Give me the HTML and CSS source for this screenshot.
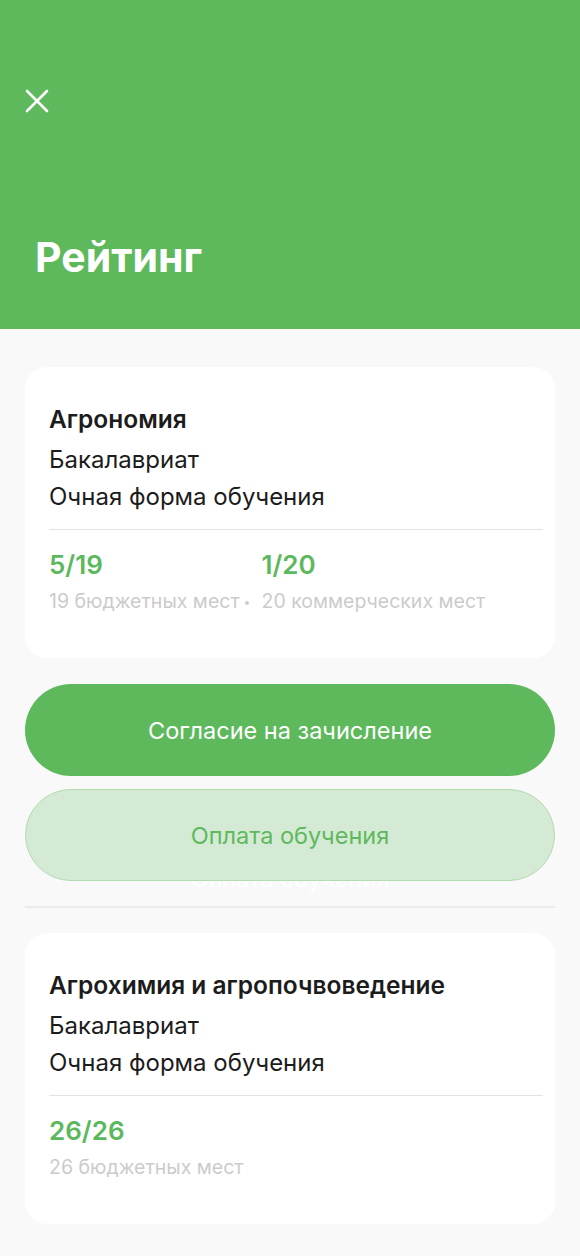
FILE: index.html
```html
<!DOCTYPE html>
<html>
  <head>
    <meta charset="utf-8" />
    <meta name="viewport" content="width=device-width, initial-scale=1.0" />
    <title>Рейтинг</title>
    <link rel="stylesheet" href="styles.css">
  </head>
  <body>
    <header class="top">
      <div class="close">
        <svg width="24" height="24" viewBox="0 0 24 24">
          <path d="M2 2 L22 22 M22 2 L2 22" stroke="#fff" stroke-width="2.6" stroke-linecap="round" fill="none"/>
        </svg>
      </div>
      <h1>Рейтинг</h1>
    </header>
    <main>
      <section class="card">
        <div class="title">Агрономия</div>
        <div class="line">Бакалавриат</div>
        <div class="line last">Очная форма обучения</div>
        <div class="stats">
          <div class="stat">
            <div class="num">5/19</div>
            <div class="sub">19 бюджетных мест</div>
          </div>
          <div class="dot"></div>
          <div class="stat">
            <div class="num">1/20</div>
            <div class="sub">20 коммерческих мест</div>
          </div>
        </div>
      </section>

      <div class="actions">
        <button class="btn primary">Согласие на зачисление</button>
        <button class="btn soft">Оплата обучения</button>
        <div class="ghost">Оплата обучения</div>
      </div>

      <hr class="sep">

      <section class="card">
        <div class="title">Агрохимия и агропочвоведение</div>
        <div class="line">Бакалавриат</div>
        <div class="line last">Очная форма обучения</div>
        <div class="stats">
          <div class="stat">
            <div class="num">26/26</div>
            <div class="sub">26 бюджетных мест</div>
          </div>
        </div>
      </section>
    </main>
  </body>
</html>
```

FILE: styles.css
```css
html, body {
    margin: 0;
    background: #f9f9f9;
    font-family: 'Inter', 'Roboto', sans-serif;
    color: #1c1c1c;
    overflow: hidden;
}
.top {
    background: #5eb95d;
    height: 329px;
    box-sizing: border-box;
    padding: 89px 0 0 25px;
}
.close {
    width: 24px;
    height: 24px;
}
.close svg {
    display: block;
}
.top h1 {
    margin: 120px 0 0 10px;
    color: #fff;
    font-size: 41px;
    font-weight: 700;
    line-height: 48px;
}
main {
    padding: 38px 25px 0;
}
.card {
    background: #fff;
    border-radius: 22px;
    padding: 33px 12px 0 24px;
    height: 291px;
    box-sizing: border-box;
}
.title {
    font-size: 24.5px;
    font-weight: 600;
    line-height: 38px;
    margin-bottom: 3px;
}
.line {
    font-size: 24px;
    line-height: 37px;
}
.line.last {
    padding-bottom: 14px;
    border-bottom: 1px solid #e2e2e2;
}
.stats {
    display: flex;
    align-items: flex-end;
    padding-top: 18px;
}
.num {
    color: #5cb85c;
    font-size: 26px;
    font-weight: 600;
    line-height: 34px;
}
.sub {
    margin-top: 2px;
    color: #cbcbcb;
    font-size: 19.5px;
    line-height: 34px;
}
.dot {
    width: 4px;
    height: 4px;
    border-radius: 50%;
    background: #cbcbcb;
    margin: 0 12px 13px 6px;
}
.actions {
    display: flex;
    flex-direction: column;
    margin-top: 26px;
}
.btn {
    position: relative;
    z-index: 1;
    height: 92px;
    border-radius: 46px;
    font-family: 'Inter', 'Roboto', sans-serif;
    font-size: 23.5px;
    box-sizing: border-box;
    cursor: pointer;
}
.primary {
    background: #5eb95d;
    color: #fff;
    border: none;
}
.soft {
    margin-top: 13px;
    background: #d5ead5;
    color: #5eb95d;
    border: 1px solid #b2dbb0;
}
.ghost {
    margin-top: -14px;
    height: 24px;
    text-align: center;
    color: #fff;
    font-size: 23.5px;
    line-height: 24px;
}
.sep {
    border: none;
    border-top: 2px solid #ebebeb;
    margin: 15px 0 25px;
}
```
